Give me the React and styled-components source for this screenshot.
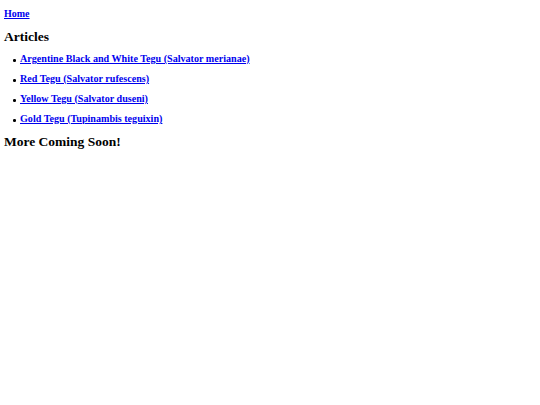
import React from 'react';
import styled, { createGlobalStyle } from 'styled-components';

const GlobalStyle = createGlobalStyle`
  body {
    margin: 0;
    background: #ffffff;
    font-family: "Liberation Serif", "Times New Roman", serif;
    color: #000000;
  }
`

const Page = styled.div`
  padding: 8px 4px;
`

const NavLink = styled.a`
  display: block;
  font-size: 10px;
  line-height: 12px;
  font-weight: bold;
  color: #0000ee;
  text-decoration: underline;
`

const Heading = styled.h2`
  margin: ${props => props.$top}px 0 0;
  font-size: 13.5px;
  line-height: 15px;
  font-weight: bold;
`

const List = styled.ul`
  margin: 9.5px 0 0;
  padding-left: 16px;
  list-style: none;
`

const Item = styled.li`
  position: relative;
  margin-bottom: 8px;
  font-size: 10.1px;
  line-height: 12px;
  font-weight: bold;

  &:last-child {
    margin-bottom: 0;
  }

  &::before {
    content: "";
    position: absolute;
    left: -7px;
    top: 6px;
    width: 2.5px;
    height: 2.5px;
    border-radius: 50%;
    background: #000;
  }
`

const ItemLink = styled.a`
  color: #0000ee;
  text-decoration: underline;
`

const articles = [
  "Argentine Black and White Tegu (Salvator merianae)",
  "Red Tegu (Salvator rufescens)",
  "Yellow Tegu (Salvator duseni)",
  "Gold Tegu (Tupinambis teguixin)",
];

export default function App() {
  return (
    <Page>
      <GlobalStyle />
      <NavLink href="#">Home</NavLink>
      <Heading $top={8.5}>Articles</Heading>
      <List>
        {articles.map(name => (
          <Item key={name}><ItemLink href="#">{name}</ItemLink></Item>
        ))}
      </List>
      <Heading $top={8.5}>More Coming Soon!</Heading>
    </Page>
  );
}
